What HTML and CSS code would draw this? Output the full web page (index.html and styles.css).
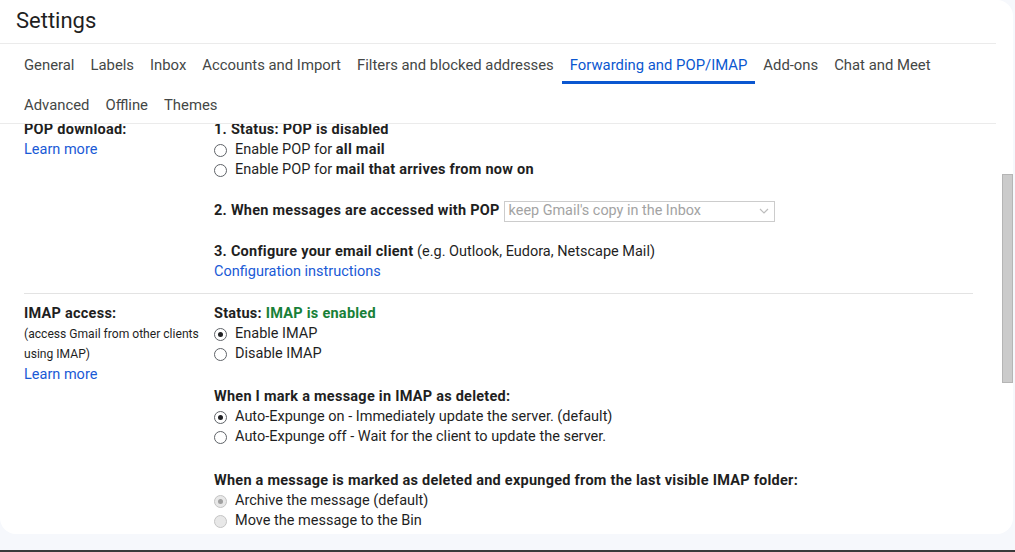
FILE: index.html
```html
<!DOCTYPE html>
<html>
<head>
<meta charset="utf-8">
<link rel="stylesheet" href="styles.css">
</head>
<body>
<div class="screen">
  <div class="card">
    <div class="main">
      <header class="title-bar"><h1 class="title">Settings</h1></header>
      <nav class="tabs">
        <a class="tab">General</a>
        <a class="tab">Labels</a>
        <a class="tab">Inbox</a>
        <a class="tab">Accounts and Import</a>
        <a class="tab">Filters and blocked addresses</a>
        <a class="tab active">Forwarding and POP/IMAP</a>
        <a class="tab">Add-ons</a>
        <a class="tab">Chat and Meet</a>
        <a class="tab">Advanced</a>
        <a class="tab">Offline</a>
        <a class="tab">Themes</a>
      </nav>
      <div class="content">
        <div class="scroller">
          <section class="row row-pop">
            <div class="label-col">
              <div class="label">POP download:</div>
              <a class="link">Learn more</a>
            </div>
            <div class="value-col">
              <div class="block">
                <div class="heading">1. Status: POP is disabled</div>
                <label class="option"><input type="radio" name="pop" class="radio"><span>Enable POP for <b>all mail</b></span></label>
                <label class="option"><input type="radio" name="pop" class="radio"><span>Enable POP for <b>mail that arrives from now on</b></span></label>
              </div>
              <div class="block gap20 select-line">
                <span class="heading">2. When messages are accessed with POP</span>
                <div class="select">
                  <span class="select-text">keep Gmail's copy in the Inbox</span>
                  <svg class="chev" width="10" height="6" viewBox="0 0 10 6"><path d="M1 1l4 4 4-4" fill="none" stroke="#bdbdbd" stroke-width="1.2"/></svg>
                </div>
              </div>
              <div class="block gap20">
                <div><span class="heading">3. Configure your email client</span> <span class="note">(e.g. Outlook, Eudora, Netscape Mail)</span></div>
                <a class="link">Configuration instructions</a>
              </div>
            </div>
          </section>
          <section class="row row-imap">
            <div class="label-col">
              <div class="label">IMAP access:</div>
              <div class="sub">(access Gmail from other clients</div>
              <div class="sub">using IMAP)</div>
              <a class="link after-sub">Learn more</a>
            </div>
            <div class="value-col">
              <div class="block">
                <div class="heading">Status: <span class="ok">IMAP is enabled</span></div>
                <label class="option"><input type="radio" name="imap" class="radio" checked><span>Enable IMAP</span></label>
                <label class="option"><input type="radio" name="imap" class="radio"><span>Disable IMAP</span></label>
              </div>
              <div class="block gap23">
                <div class="heading">When I mark a message in IMAP as deleted:</div>
                <label class="option"><input type="radio" name="exp" class="radio" checked><span>Auto-Expunge on - Immediately update the server. (default)</span></label>
                <label class="option"><input type="radio" name="exp" class="radio"><span>Auto-Expunge off - Wait for the client to update the server.</span></label>
              </div>
              <div class="block gap24">
                <div class="heading">When a message is marked as deleted and expunged from the last visible IMAP folder:</div>
                <label class="option"><input type="radio" name="del" class="radio" checked disabled><span>Archive the message (default)</span></label>
                <label class="option"><input type="radio" name="del" class="radio" disabled><span>Move the message to the Bin</span></label>
                <label class="option"><input type="radio" name="del" class="radio" disabled><span>Immediately delete the message forever</span></label>
              </div>
            </div>
          </section>
        </div>
      </div>
    </div>
    <div class="scrollbar"><div class="thumb"></div></div>
  </div>
  <div class="taskbar"></div>
</div>
</body>
</html>
```
FILE: styles.css
```css
* { box-sizing: border-box; }
html, body { margin: 0; padding: 0; }
body {
  width: 1015px;
  height: 552px;
  overflow: hidden;
  background: #f6f8fc;
  font-family: Roboto, "Liberation Sans", Arial, sans-serif;
  color: #1f1f1f;
}
.screen {
  height: 552px;
  display: flex;
  flex-direction: column;
}
.card {
  position: relative;
  width: 1013px;
  height: 534px;
  background: #fff;
  border-radius: 0 16px 16px 16px;
  overflow: hidden;
  display: flex;
}
.main {
  width: 996px;
  display: flex;
  flex-direction: column;
}
.title-bar {
  height: 44px;
  flex: none;
  border-bottom: 1px solid #ebebeb;
  padding-left: 16px;
  display: flex;
  align-items: center;
}
.title {
  margin: 0 0 2px 0;
  font-size: 22px;
  font-weight: 400;
  color: #1f1f1f;
}
.tabs {
  height: 80px;
  flex: none;
  display: flex;
  flex-wrap: wrap;
  align-content: flex-start;
  padding: 0 16px;
  border-bottom: 1px solid #ebebeb;
}
.tab {
  height: 40px;
  padding: 5px 8px 0;
  display: flex;
  align-items: center;
  font-size: 14.85px;
  color: #444746;
  border-bottom: 3px solid transparent;
}
.tab.active {
  color: #0b57d0;
  border-bottom-color: #0b57d0;
}
.content {
  flex: 1;
  overflow: hidden;
  padding: 0 23px 0 24px;
}
.scroller {
  margin-top: -4px;
}
.row {
  display: grid;
  grid-template-columns: 190px 1fr;
  border-bottom: 1px solid #e3e3e3;
  font-size: 14.5px;
  line-height: 20px;
}
.row-pop { padding: 0 0 11px; }
.row-imap { padding: 10px 0 0; border-bottom: none; }
.label, .heading, b { font-weight: 700; letter-spacing: 0.25px; }
.link { color: #1a5ad6; display: block; }
.sub { font-size: 12.1px; line-height: 20px; color: #1f1f1f; }
.link.after-sub { margin-top: 1px; }
.note { font-weight: 400; }
.ok { color: #188038; }
.option {
  display: flex;
  align-items: center;
  height: 20px;
}
.radio {
  appearance: none;
  -webkit-appearance: none;
  width: 13px;
  height: 13px;
  margin: 0 8px 0 0;
  border: 1px solid #5f6368;
  border-radius: 50%;
  background: #fff;
  position: relative;
  flex: none;
}
.radio:checked::after {
  content: "";
  position: absolute;
  left: 3px;
  top: 3px;
  width: 5px;
  height: 5px;
  border-radius: 50%;
  background: #202124;
}
.radio:disabled {
  background: #e8e8e8;
  border-color: #c4c4c4;
}
.radio:disabled:checked::after { background: #a0a0a0; }
.gap20 { margin-top: 20px; }
.gap23 { margin-top: 23px; }
.gap24 { margin-top: 24px; }
.select-line {
  display: flex;
  align-items: center;
  height: 22px;
}
.select {
  margin-left: 4px;
  width: 271px;
  height: 21px;
  border: 1px solid #cccccc;
  display: flex;
  align-items: center;
  justify-content: space-between;
  padding: 0 4px;
  letter-spacing: 0;
}
.select-text {
  font-size: 14.4px;
  font-weight: 400;
  color: #a3a3a3;
}
.chev { margin-right: 1px; }
.scrollbar {
  position: absolute;
  top: 124px;
  right: 0;
  width: 11px;
  height: 410px;
}
.thumb {
  margin-top: 50px;
  height: 209px;
  background: #cbcbcb;
  border: 1px solid #b5b5b5;
}
.taskbar {
  margin-top: auto;
  height: 2px;
  background: #3a3a3a;
}
```
